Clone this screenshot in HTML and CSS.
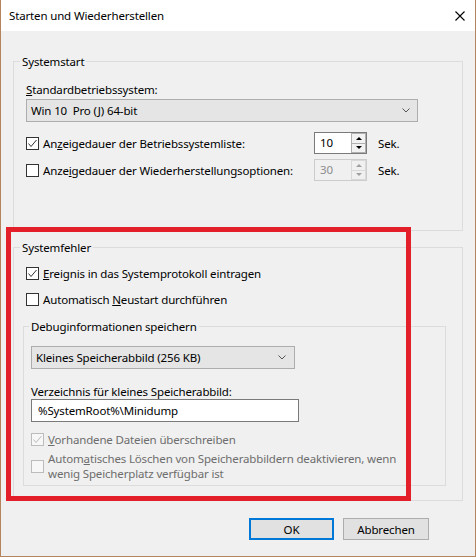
FILE: index.html
```html
<!DOCTYPE html>
<html lang="de">
<head>
    <meta charset="UTF-8">
    <meta name="viewport" content="width=device-width, initial-scale=1.0">
    <title>Starten und Wiederherstellen</title>
    <link rel="stylesheet" href="styles.css">
</head>
<body>
    <div class="window">
        <div class="titlebar">
            <span class="title">Starten und Wiederherstellen</span>
            <svg class="close" width="10" height="10" viewBox="0 0 10 10">
                <path d="M0.5 0.5 L9.5 9.5 M9.5 0.5 L0.5 9.5" stroke="#000" stroke-width="1.1" fill="none"/>
            </svg>
        </div>

        <div class="content">
            <fieldset class="group group-start">
                <legend>Systemstart</legend>

                <div class="field-label"><u>S</u>tandardbetriebssystem:</div>
                <div class="combo combo-os">
                    <span class="combo-text">Win 10&nbsp; Pro (J) 64-bit</span>
                    <svg class="chevron" width="8" height="5" viewBox="0 0 8 5">
                        <path d="M0.5 0.5 L4 4 L7.5 0.5" stroke="#555" fill="none"/>
                    </svg>
                </div>

                <div class="time-row">
                    <label class="check">
                        <span class="box">
                            <svg width="11" height="11" viewBox="0 0 11 11"><path d="M1.5 5.5 L4 8.5 L9.5 2" stroke="#333" fill="none"/></svg>
                        </span>
                        <span>An<u>z</u>eigedauer der Betriebssystemliste:</span>
                    </label>
                    <div class="spin">
                        <span class="spin-value">10</span>
                        <span class="spin-buttons">
                            <span class="spin-btn"><i class="arrow-up"></i></span>
                            <span class="spin-btn"><i class="arrow-down"></i></span>
                        </span>
                    </div>
                    <span class="unit">Sek.</span>
                </div>

                <div class="time-row second">
                    <label class="check">
                        <span class="box"></span>
                        <span>Anze<u>i</u>gedauer der Wiederherstellungsoptionen:</span>
                    </label>
                    <div class="spin disabled">
                        <span class="spin-value">30</span>
                        <span class="spin-buttons">
                            <span class="spin-btn"><i class="arrow-up"></i></span>
                            <span class="spin-btn"><i class="arrow-down"></i></span>
                        </span>
                    </div>
                    <span class="unit">Sek.</span>
                </div>
            </fieldset>

            <fieldset class="group group-error">
                <legend>Systemfehler</legend>

                <label class="check">
                    <span class="box">
                        <svg width="11" height="11" viewBox="0 0 11 11"><path d="M1.5 5.5 L4 8.5 L9.5 2" stroke="#333" fill="none"/></svg>
                    </span>
                    <span><u>E</u>reignis in das Systemprotokoll eintragen</span>
                </label>
                <label class="check restart">
                    <span class="box"></span>
                    <span>Automatisch <u>N</u>eustart durchführen</span>
                </label>

                <fieldset class="group debug">
                    <legend>Debuginformationen speichern</legend>

                    <div class="combo combo-dump">
                        <span class="combo-text">Kleines Speicherabbild (256 KB)</span>
                        <svg class="chevron" width="8" height="5" viewBox="0 0 8 5">
                            <path d="M0.5 0.5 L4 4 L7.5 0.5" stroke="#555" fill="none"/>
                        </svg>
                    </div>

                    <div class="field-label dir-label">Verzeichnis für kleines Speicherabbild:</div>
                    <div class="textbox">%SystemRoot%\Minidump</div>

                    <label class="check disabled overwrite">
                        <span class="box">
                            <svg width="11" height="11" viewBox="0 0 11 11"><path d="M1.5 5.5 L4 8.5 L9.5 2" stroke="#bcbcbc" fill="none"/></svg>
                        </span>
                        <span><u>V</u>orhandene Dateien überschreiben</span>
                    </label>
                    <label class="check disabled multiline">
                        <span class="box"></span>
                        <span class="two-lines">Autom<u>a</u>tisches Löschen von Speicherabbildern deaktivieren, wenn wenig Speicherplatz verfügbar ist</span>
                    </label>
                </fieldset>
            </fieldset>

            <div class="buttons">
                <button type="button" class="btn default">OK</button>
                <button type="button" class="btn">Abbrechen</button>
            </div>
        </div>

        <div class="highlight"></div>
    </div>
</body>
</html>
```

FILE: styles.css
```css
body {
    margin: 0;
    background: #fff;
    font-family: "Noto Sans", "Open Sans", sans-serif;
    font-size: 11.5px;
    letter-spacing: -0.15px;
    line-height: 15px;
    color: #000;
}
.window {
    position: relative;
    width: 476px;
    height: 557px;
    box-sizing: border-box;
    border: 1px solid #b5835c;
    border-top: none;
    background: #f0f0f0;
    display: flex;
    flex-direction: column;
}
.titlebar {
    height: 31px;
    background: #fff;
    display: flex;
    align-items: center;
    justify-content: space-between;
    padding: 0 10px 0 8px;
}
.close {
    display: block;
}
.content {
    flex: 1;
    padding: 23px 12px 0;
}
.group {
    margin: 0;
    padding: 13px 12px 49px;
    border: 1px solid #dcdcdc;
    min-width: 0;
}
.group legend {
    padding: 0 2px;
    margin-left: -6px;
}
.field-label {
    height: 15px;
}
.combo {
    height: 23px;
    box-sizing: border-box;
    margin-top: 2px;
    border: 1px solid #adadad;
    background: #e5e5e5;
    display: flex;
    align-items: center;
    justify-content: space-between;
    padding: 0 7px 0 4px;
}
.combo-os {
    width: 392px;
}
.combo-text {
    white-space: pre;
}
.chevron {
    display: block;
}
.time-row {
    display: flex;
    align-items: center;
    height: 22px;
    margin-top: 10px;
}
.time-row.second {
    margin-top: 5px;
}
.time-row .check {
    width: 288px;
    flex: none;
}
.check {
    display: flex;
    align-items: center;
    gap: 4px;
}
.box {
    width: 13px;
    height: 13px;
    box-sizing: border-box;
    border: 1px solid #333;
    background: #fff;
    flex: none;
    display: flex;
    align-items: center;
    justify-content: center;
}
.box svg {
    display: block;
}
.check.disabled {
    color: #6d6d6d;
}
.check.disabled .box {
    border-color: #bcbcbc;
    background: #f7f7f7;
}
.spin {
    width: 53px;
    height: 22px;
    flex: none;
    box-sizing: border-box;
    border: 1px solid #7a7a7a;
    background: #fff;
    display: flex;
}
.spin-value {
    padding-left: 5px;
    line-height: 20px;
}
.spin-buttons {
    margin-left: auto;
    width: 15px;
    display: flex;
    flex-direction: column;
}
.spin-btn {
    flex: 1;
    border: 1px solid #b0b0b0;
    background: #f2f2f2;
    display: flex;
    align-items: center;
    justify-content: center;
}
.spin-btn + .spin-btn {
    border-top: none;
}
.arrow-up, .arrow-down {
    width: 0;
    height: 0;
    border-left: 3px solid transparent;
    border-right: 3px solid transparent;
}
.arrow-up {
    border-bottom: 3px solid #000;
}
.arrow-down {
    border-top: 3px solid #000;
}
.spin.disabled {
    border-color: #cccccc;
    background: #f0f0f0;
    color: #8d8d8d;
}
.spin.disabled .spin-btn {
    border-color: #d9d9d9;
    background: #f0f0f0;
}
.spin.disabled .arrow-up {
    border-bottom-color: #a0a0a0;
}
.spin.disabled .arrow-down {
    border-top-color: #a0a0a0;
}
.unit {
    margin-left: 11px;
}
.group-error {
    margin-top: 9px;
    padding: 11px 12px 14px;
}
.group-error > .check {
    height: 15px;
}
.group-error > .restart {
    margin-top: 11px;
}
.group.debug {
    margin: 12px 4px 0 -3px;
    padding: 12px 7px 4px;
}
.group.debug legend {
    margin-left: -2px;
}
.combo-dump {
    width: 264px;
    margin-top: 0;
    padding-right: 8px;
}
.dir-label {
    margin-top: 15px;
}
.textbox {
    width: 268px;
    height: 23px;
    box-sizing: border-box;
    border: 1px solid #7a7a7a;
    background: #fff;
    padding-left: 6px;
    line-height: 21px;
}
.overwrite {
    margin-top: 10px;
    height: 15px;
}
.multiline {
    margin-top: 4px;
}
.two-lines {
    width: 360px;
}
.buttons {
    display: flex;
    justify-content: flex-end;
    gap: 9px;
    margin: 17px 34px 0 0;
}
.btn {
    height: 22px;
    box-sizing: border-box;
    font-family: inherit;
    font-size: 11.5px;
    letter-spacing: -0.15px;
    color: #000;
    background: #e1e1e1;
    border: 1px solid #adadad;
    padding: 0;
}
.btn.default {
    width: 85px;
    border: 2px solid #0078d7;
}
.btn + .btn {
    width: 86px;
}
.highlight {
    position: absolute;
    left: 5px;
    top: 227px;
    width: 405px;
    height: 274px;
    box-sizing: border-box;
    border: 5px solid #e3202a;
}
```
